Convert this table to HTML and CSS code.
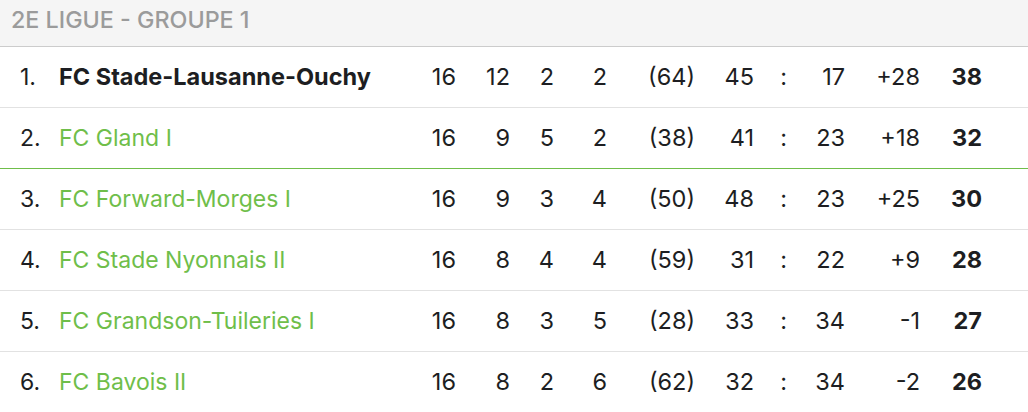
FILE: index.html
```html
<!DOCTYPE html>
<html lang="fr">
<head>
<meta charset="utf-8">
<title>2e ligue - Groupe 1</title>
<link rel="stylesheet" href="styles.css">
</head>
<body>
<div class="standings">
  <div class="group-title">2E LIGUE - GROUPE 1</div>
  <div class="row own">
    <span class="rank">1.</span><span class="team">FC Stade-Lausanne-Ouchy</span>
    <span class="n c1">16</span><span class="n c2">12</span><span class="n c3">2</span><span class="n c4">2</span>
    <span class="n c5">(64)</span><span class="n c6">45</span><span class="n c7">:</span><span class="n c8">17</span><span class="n c9">+28</span><span class="n pts">38</span>
  </div>
  <div class="row promo">
    <span class="rank">2.</span><span class="team link">FC Gland I</span>
    <span class="n c1">16</span><span class="n c2">9</span><span class="n c3">5</span><span class="n c4">2</span>
    <span class="n c5">(38)</span><span class="n c6">41</span><span class="n c7">:</span><span class="n c8">23</span><span class="n c9">+18</span><span class="n pts">32</span>
  </div>
  <div class="row">
    <span class="rank">3.</span><span class="team link">FC Forward-Morges I</span>
    <span class="n c1">16</span><span class="n c2">9</span><span class="n c3">3</span><span class="n c4">4</span>
    <span class="n c5">(50)</span><span class="n c6">48</span><span class="n c7">:</span><span class="n c8">23</span><span class="n c9">+25</span><span class="n pts">30</span>
  </div>
  <div class="row">
    <span class="rank">4.</span><span class="team link">FC Stade Nyonnais II</span>
    <span class="n c1">16</span><span class="n c2">8</span><span class="n c3">4</span><span class="n c4">4</span>
    <span class="n c5">(59)</span><span class="n c6">31</span><span class="n c7">:</span><span class="n c8">22</span><span class="n c9">+9</span><span class="n pts">28</span>
  </div>
  <div class="row">
    <span class="rank">5.</span><span class="team link">FC Grandson-Tuileries I</span>
    <span class="n c1">16</span><span class="n c2">8</span><span class="n c3">3</span><span class="n c4">5</span>
    <span class="n c5">(28)</span><span class="n c6">33</span><span class="n c7">:</span><span class="n c8">34</span><span class="n c9">-1</span><span class="n pts">27</span>
  </div>
  <div class="row">
    <span class="rank">6.</span><span class="team link">FC Bavois II</span>
    <span class="n c1">16</span><span class="n c2">8</span><span class="n c3">2</span><span class="n c4">6</span>
    <span class="n c5">(62)</span><span class="n c6">32</span><span class="n c7">:</span><span class="n c8">34</span><span class="n c9">-2</span><span class="n pts">26</span>
  </div>
</div>
</body>
</html>
```
FILE: styles.css
```css
html, body {
  margin: 0;
  padding: 0;
  background: #ffffff;
}
body {
  font-family: Inter, "Liberation Sans", sans-serif;
  color: #1d1e22;
}
.standings {
  width: 1028px;
}
.group-title {
  box-sizing: border-box;
  height: 47px;
  padding: 6px 0 0 11px;
  background: #f5f5f5;
  border-bottom: 1px solid #cccccc;
  color: #9b9b9b;
  font-size: 23.3px;
  line-height: 28px;
  font-weight: 500;
}
.row {
  display: grid;
  grid-template-columns: 59px 361px 36px 54px 44px 53px 88px 59px 34px 57px 75px 62px 1fr;
  align-items: center;
  height: 60px;
  border-bottom: 1px solid #e2e2e2;
  font-size: 23.5px;
  line-height: 28px;
}
.row.promo {
  border-bottom-color: #6fbe4a;
}
.rank {
  padding-left: 20px;
  font-size: 23px;
}
.team {
  white-space: nowrap;
}
.own .team {
  font-weight: 700;
}
.link {
  color: #6fbe4a;
  font-size: 23px;
}
.n {
  text-align: right;
}
.c7 {
  padding-right: 1px;
}
.pts {
  font-weight: 700;
}
```
